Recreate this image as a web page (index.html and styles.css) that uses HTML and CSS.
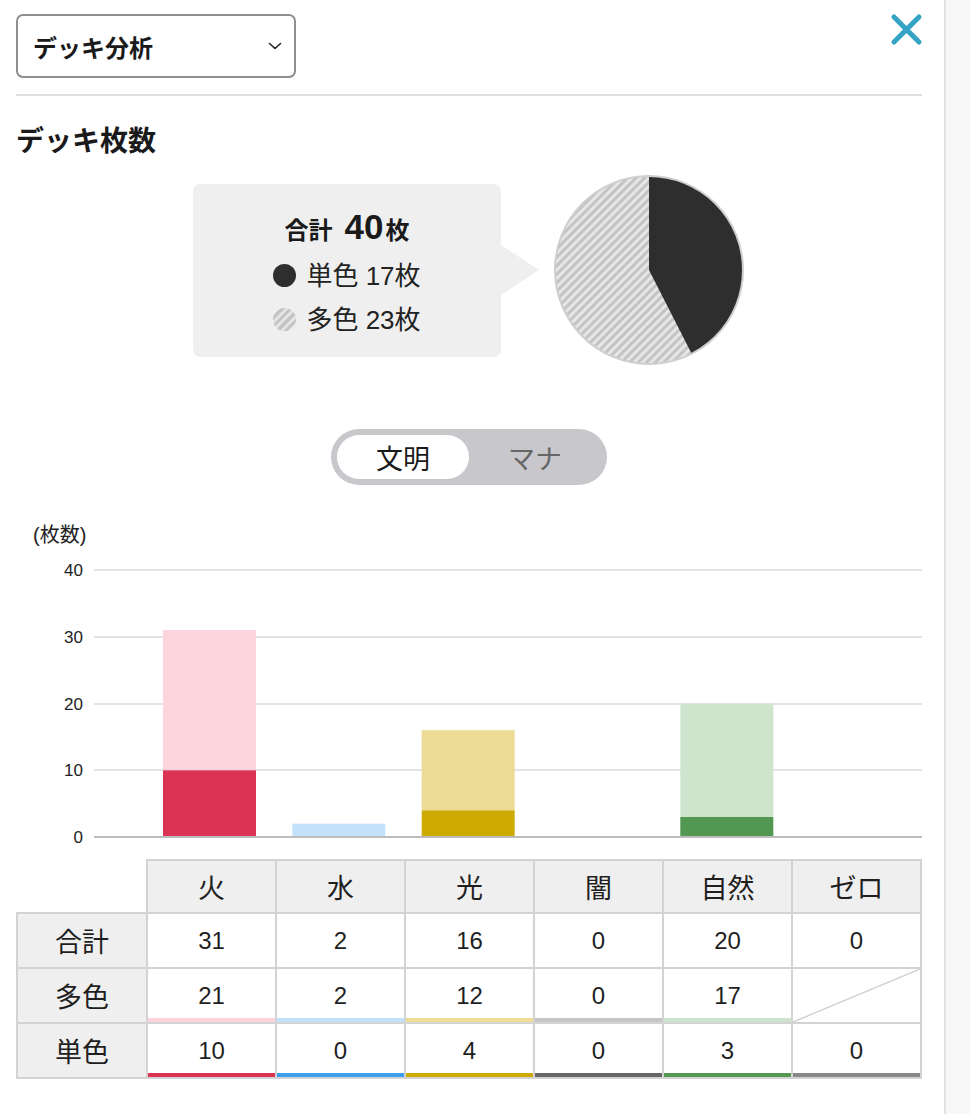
FILE: index.html
```html
<!DOCTYPE html>
<html lang="ja">
<head>
<meta charset="utf-8">
<title>デッキ分析</title>
<link rel="stylesheet" href="styles.css">
</head>
<body>
<div class="panel">
  <div class="header">
    <div class="select">
      <span class="select-label">デッキ分析</span>
      <svg class="chevron" width="14" height="8" viewBox="0 0 14 8"><path d="M1.5 1.5 L7 6.5 L12.5 1.5" fill="none" stroke="#222" stroke-width="1.6" stroke-linecap="round" stroke-linejoin="round"/></svg>
    </div>
    <svg class="close" width="34" height="34" viewBox="0 0 34 34"><path d="M5 5 L30 30 M30 5 L5 30" stroke="#35a3c4" stroke-width="5" stroke-linecap="round"/></svg>
  </div>
  <div class="divider"></div>

  <h2 class="heading">デッキ枚数</h2>

  <div class="summary">
    <div class="tip">
      <div class="tip-title">合計<span class="tip-num">40</span>枚</div>
      <div class="legend">
        <div class="legend-row"><span class="dot dot-single"></span>単色 17枚</div>
        <div class="legend-row"><span class="dot dot-multi"></span>多色 23枚</div>
      </div>
    </div>
    <div class="tip-arrow"></div>
    <svg class="pie" width="192" height="192" viewBox="0 0 192 192">
      <defs>
        <pattern id="hatch" width="6" height="6" patternUnits="userSpaceOnUse" patternTransform="rotate(45)">
          <rect width="6" height="6" fill="#e6e6e6"/>
          <rect width="3" height="6" fill="#c4c4c4"/>
        </pattern>
      </defs>
      <circle cx="96" cy="96" r="94" fill="url(#hatch)"/>
      <path d="M96 96 L96 2 A94 94 0 0 1 138.7 179.7 Z" fill="#2e2e2e"/>
      <circle cx="96" cy="96" r="94" fill="none" stroke="#cfcfcf" stroke-width="2"/>
    </svg>
  </div>

  <div class="toggle-wrap">
    <div class="toggle">
      <div class="toggle-opt active">文明</div>
      <div class="toggle-opt">マナ</div>
    </div>
  </div>

  <svg class="chart" width="906" height="325" viewBox="0 0 906 325">
    <text class="axis-title" x="17" y="21">(枚数)</text>
    <g class="grid">
      <line x1="78" x2="906" y1="49" y2="49"/>
      <line x1="78" x2="906" y1="116" y2="116"/>
      <line x1="78" x2="906" y1="183" y2="183"/>
      <line x1="78" x2="906" y1="249" y2="249"/>
    </g>
    <g class="ylabels">
      <text x="67" y="55">40</text>
      <text x="67" y="122">30</text>
      <text x="67" y="189">20</text>
      <text x="67" y="255">10</text>
      <text x="67" y="322">0</text>
    </g>
    <!-- 火: 31 total, 10 single -->
    <rect x="147" y="109.1" width="93" height="140.2" fill="#fdd3dc"/>
    <rect x="147" y="249.3" width="93" height="66.7" fill="#dc3254"/>
    <!-- 水: 2 total, 0 single -->
    <rect x="276.3" y="302.7" width="93" height="13.3" fill="#c2e1fb"/>
    <!-- 光: 16 total, 4 single -->
    <rect x="405.7" y="209.2" width="93" height="80.1" fill="#ecdc96"/>
    <rect x="405.7" y="289.3" width="93" height="26.7" fill="#cdab03"/>
    <!-- 自然: 20 total, 3 single -->
    <rect x="664.3" y="182.5" width="93" height="113.5" fill="#cfe4cd"/>
    <rect x="664.3" y="296" width="93" height="20" fill="#529853"/>
    <line class="baseline" x1="78" x2="906" y1="316" y2="316"/>
  </svg>

  <table class="stats">
    <colgroup>
      <col class="col-head">
      <col><col><col><col><col><col>
    </colgroup>
    <thead>
      <tr>
        <th class="corner"></th>
        <th>火</th><th>水</th><th>光</th><th>闇</th><th>自然</th><th>ゼロ</th>
      </tr>
    </thead>
    <tbody>
      <tr>
        <th>合計</th>
        <td>31</td><td>2</td><td>16</td><td>0</td><td>20</td><td>0</td>
      </tr>
      <tr>
        <th>多色</th>
        <td class="u fire-l">21</td>
        <td class="u water-l">2</td>
        <td class="u light-l">12</td>
        <td class="u dark-l">0</td>
        <td class="u nature-l">17</td>
        <td class="na"></td>
      </tr>
      <tr>
        <th>単色</th>
        <td class="u fire">10</td>
        <td class="u water">0</td>
        <td class="u light">4</td>
        <td class="u dark">0</td>
        <td class="u nature">3</td>
        <td class="u zero">0</td>
      </tr>
    </tbody>
  </table>
</div>
</body>
</html>
```
FILE: styles.css
```css
* { box-sizing: border-box; }

html, body {
  margin: 0;
  padding: 0;
}

body {
  background: #f8f8f8;
  font-family: "Liberation Sans", "Noto Sans CJK JP", sans-serif;
  color: #1f1f1f;
}

.panel {
  width: 946px;
  min-height: 1114px;
  background: #fff;
  border-right: 2px solid #e2e2e2;
  padding: 14px 22px 0 16px;
}

.header {
  display: flex;
  justify-content: space-between;
  align-items: flex-start;
}

.select {
  width: 280px;
  height: 64px;
  border: 2px solid #8d8d92;
  border-radius: 7px;
  display: flex;
  align-items: center;
  justify-content: space-between;
  padding: 0 12px 0 15px;
}

.select-label {
  font-size: 24px;
  font-weight: bold;
  color: #1a1a1a;
}

.chevron { display: block; }

.close {
  display: block;
  margin-top: -2px;
  margin-right: -1px;
}

.divider {
  height: 2px;
  background: #e0e0e0;
  margin-top: 16px;
}

.heading {
  margin: 28px 0 0 0;
  font-size: 28px;
  line-height: 36px;
  font-weight: bold;
  color: #1a1a1a;
}

.summary {
  display: flex;
  align-items: center;
  justify-content: center;
  margin-top: 14px;
}

.tip {
  width: 308px;
  height: 173px;
  background: #efefef;
  border-radius: 7px;
  padding-top: 24px;
  display: flex;
  flex-direction: column;
  align-items: center;
}

.tip-title {
  font-size: 24px;
  font-weight: bold;
  line-height: 38px;
  color: #1a1a1a;
  display: flex;
  align-items: baseline;
}

.tip-num {
  font-size: 35px;
  margin: 0 2px 0 12px;
}

.legend {
  margin-top: 4px;
  font-size: 26px;
  line-height: 44px;
  color: #222;
}

.legend-row {
  display: flex;
  align-items: center;
}

.dot {
  width: 23px;
  height: 23px;
  border-radius: 50%;
  margin-right: 10px;
}

.dot-single { background: #2e2e2e; }

.dot-multi {
  background: repeating-linear-gradient(-45deg, #c4c4c4 0 3px, #e4e4e4 3px 6px);
}

.tip-arrow {
  width: 0;
  height: 0;
  border-left: 38px solid #efefef;
  border-top: 25px solid transparent;
  border-bottom: 25px solid transparent;
  margin-right: 14px;
}

.pie { display: block; }

.toggle-wrap {
  display: flex;
  justify-content: center;
  margin-top: 63px;
}

.toggle {
  width: 276px;
  height: 56px;
  border-radius: 28px;
  background: #c8c8cc;
  padding: 6px;
  display: flex;
}

.toggle-opt {
  width: 132px;
  border-radius: 22px;
  font-size: 27px;
  display: flex;
  align-items: center;
  justify-content: center;
  color: #666;
}

.toggle-opt + .toggle-opt { flex: 1; }

.toggle-opt.active {
  background: #fff;
  color: #1a1a1a;
}

.chart {
  display: block;
  margin-top: 36px;
}

.axis-title {
  font-size: 20px;
  fill: #222;
}

.grid line {
  stroke: #e3e3e3;
  stroke-width: 2;
}

.ylabels text {
  font-size: 17px;
  fill: #222;
  text-anchor: end;
}

.baseline {
  stroke: #bbbbbb;
  stroke-width: 2;
}

.stats {
  width: 906px;
  margin-top: 13px;
  border-collapse: collapse;
  table-layout: fixed;
  font-size: 24px;
  color: #1f1f1f;
}

.col-head { width: 130px; }

.stats th,
.stats td {
  border: 2px solid #d3d3d3;
  text-align: center;
  padding: 0;
  font-weight: normal;
}

.stats th {
  font-size: 27px;
}

.stats thead th {
  height: 53px;
  background: #efefef;
}

.stats tbody th {
  background: #efefef;
}

.stats tbody tr { height: 55px; }

.stats th.corner {
  border: none;
  background: #fff;
}

.u {
  background-repeat: no-repeat;
  background-position: bottom;
  background-size: 100% 4px;
}

.fire-l { background-image: linear-gradient(#fdd3dc, #fdd3dc); }
.water-l { background-image: linear-gradient(#c2e1fb, #c2e1fb); }
.light-l { background-image: linear-gradient(#ecdc96, #ecdc96); }
.dark-l { background-image: linear-gradient(#c6c6c6, #c6c6c6); }
.nature-l { background-image: linear-gradient(#cfe4cd, #cfe4cd); }

.fire { background-image: linear-gradient(#dc3254, #dc3254); }
.water { background-image: linear-gradient(#3c9ff0, #3c9ff0); }
.light { background-image: linear-gradient(#cdab03, #cdab03); }
.dark { background-image: linear-gradient(#666666, #666666); }
.nature { background-image: linear-gradient(#529853, #529853); }
.zero { background-image: linear-gradient(#888888, #888888); }

.na {
  background: linear-gradient(to bottom right, transparent calc(50% - 1.2px), #c8c8c8 50%, transparent calc(50% + 1.2px));
}
```
